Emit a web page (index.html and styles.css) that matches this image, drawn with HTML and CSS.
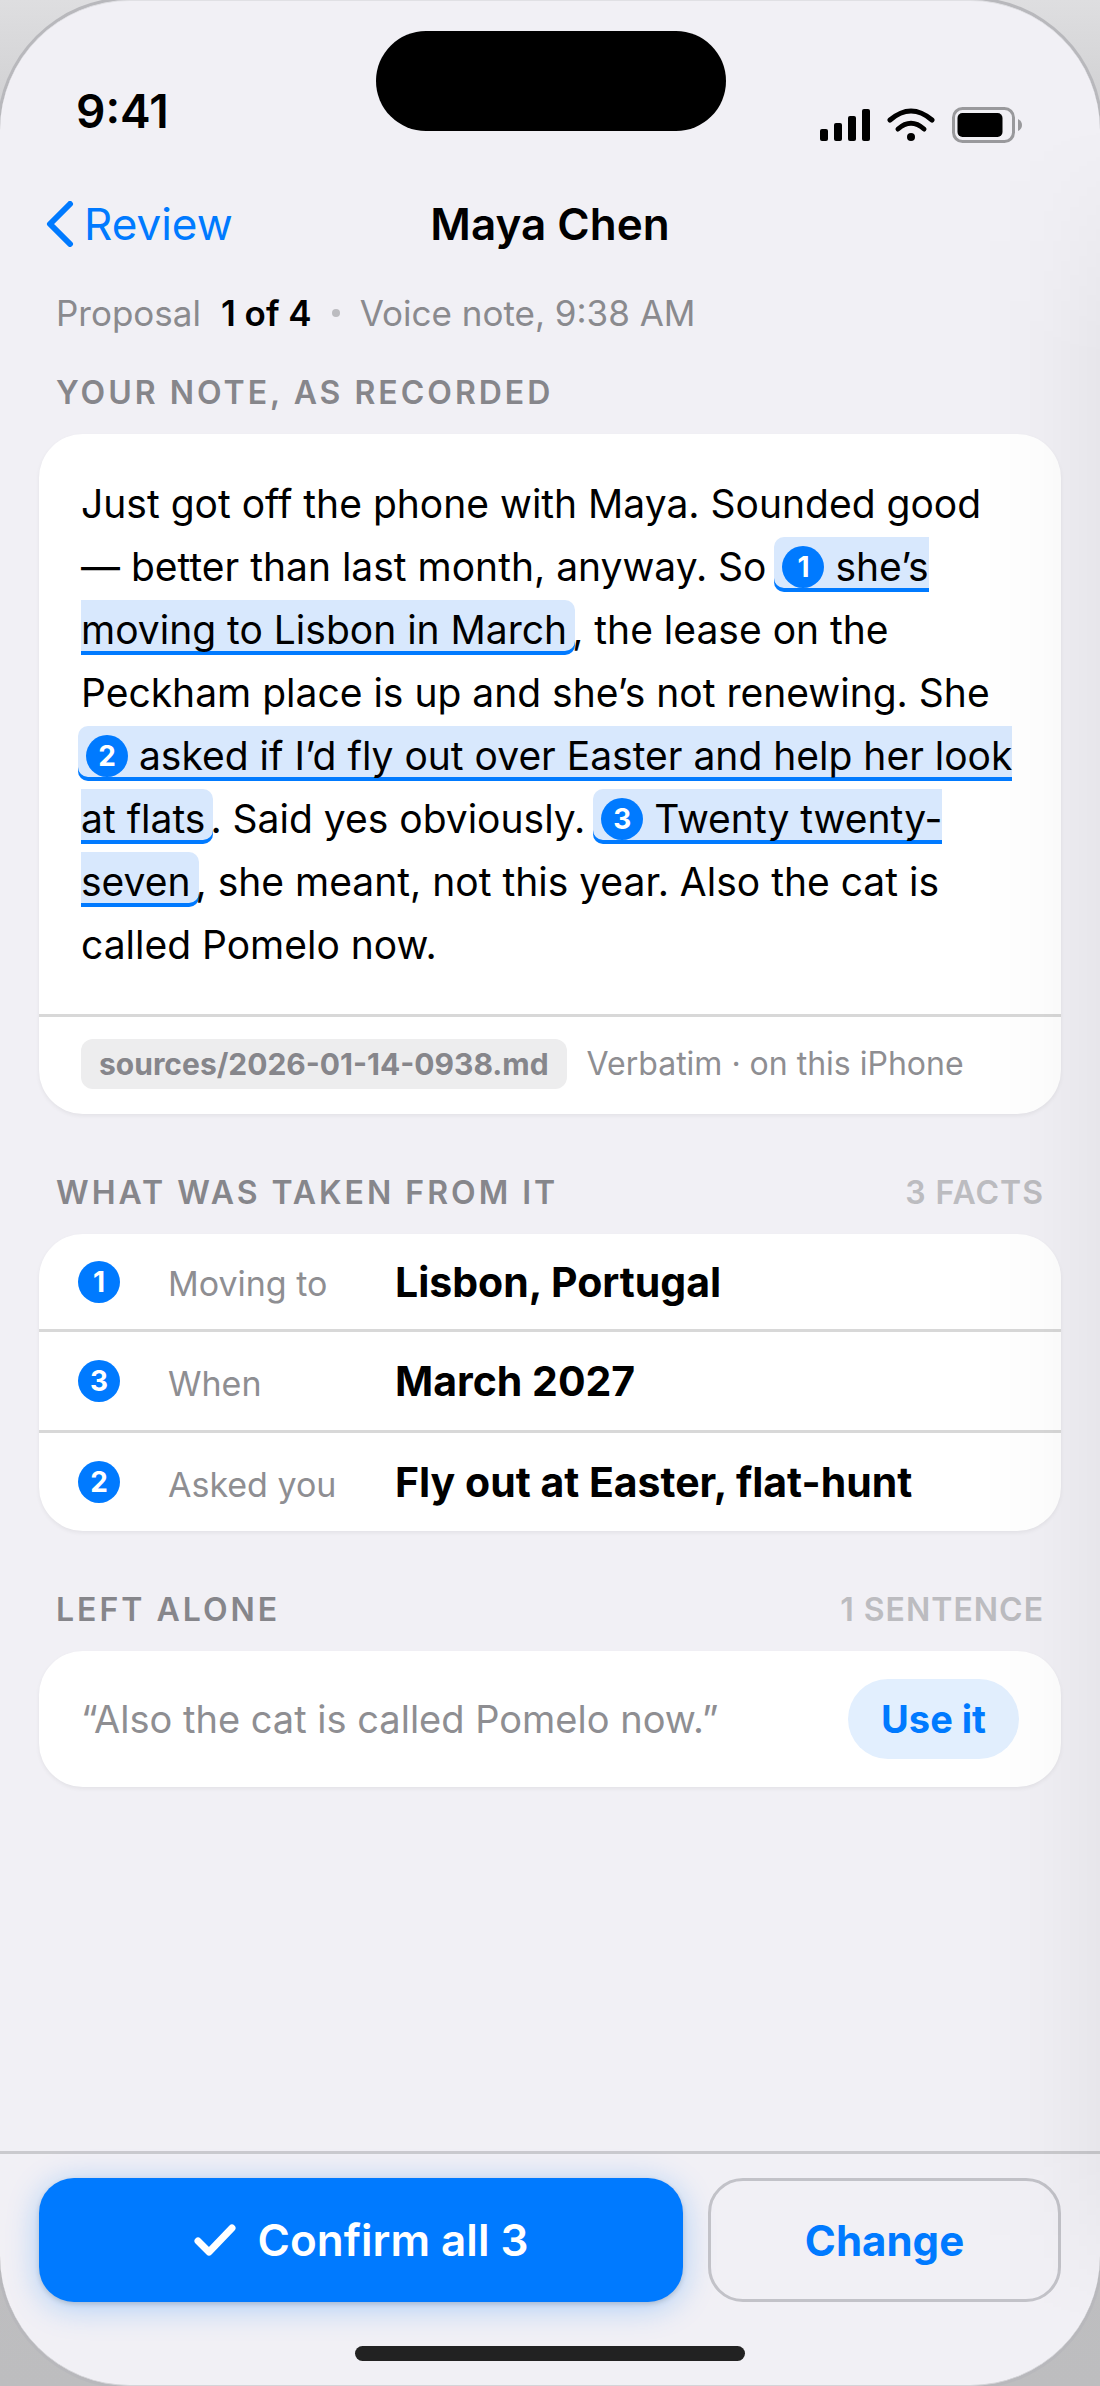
FILE: index.html
```html
<!DOCTYPE html>
<html lang="en">
<head>
  <meta charset="UTF-8" />
  <meta name="viewport" content="width=device-width, initial-scale=1.0"/>
  <title>Maya Chen</title>
  <link rel="stylesheet" href="styles.css">
</head>
<body>
  <div class="phone">
    <div class="island"></div>

    <!-- Status bar -->
    <div class="status-bar">
      <span class="time">9:41</span>
      <div class="status-icons">
        <svg class="signal" viewBox="0 0 50 32" aria-hidden="true">
          <rect x="0" y="20" width="8" height="12" rx="2"/>
          <rect x="14" y="14" width="8" height="18" rx="2"/>
          <rect x="28" y="7" width="8" height="25" rx="2"/>
          <rect x="42" y="0" width="8" height="32" rx="2"/>
        </svg>
        <svg class="wifi" viewBox="0 0 48 34" aria-hidden="true">
          <path d="M3 12 Q24 -6 45 12"/>
          <path d="M11 21 Q24 9.500 37 21"/>
          <circle cx="24" cy="29" r="4"/>
        </svg>
        <svg class="battery" viewBox="0 0 70 36" aria-hidden="true">
          <rect class="shell" x="1.500" y="1.500" width="60" height="33" rx="9"/>
          <rect x="5.500" y="6" width="45" height="24" rx="5"/>
          <path class="nub" d="M66 12 Q70 14 70 18 Q70 22 66 24 Z"/>
        </svg>
      </div>
    </div>

    <!-- Navigation -->
    <header class="nav">
      <a class="back" href="#">
        <svg viewBox="0 0 28 46" aria-hidden="true"><path d="M24 3 L4 23 L24 43"/></svg>
        <span>Review</span>
      </a>
      <h1>Maya Chen</h1>
    </header>

    <main class="content">
      <p class="meta">Proposal <strong>1 of 4</strong><span class="dot"></span>Voice note, 9:38 AM</p>

      <!-- Recorded note -->
      <section>
        <div class="section-head">
          <h2>Your note, as recorded</h2>
        </div>
        <div class="card">
          <p class="note">Just got off the phone with Maya. Sounded good — better than last month, anyway. So <mark><span class="badge">1</span> she’s moving to Lisbon in March</mark>, the lease on the Peckham place is up and she’s not renewing. She <mark><span class="badge">2</span> asked if I’d fly out over Easter and help her look at flats</mark>. Said yes obviously. <mark><span class="badge">3</span> Twenty twenty-seven</mark>, she meant, not this year. Also the cat is called Pomelo now.</p>
          <div class="source">
            <span class="file">sources/2026-01-14-0938.md</span>
            <span>Verbatim · on this iPhone</span>
          </div>
        </div>
      </section>

      <!-- Facts -->
      <section>
        <div class="section-head">
          <h2>What was taken from it</h2>
          <span class="count">3 facts</span>
        </div>
        <table class="card facts">
          <tr>
            <td class="num"><span class="badge">1</span></td>
            <th scope="row">Moving to</th>
            <td>Lisbon, Portugal</td>
          </tr>
          <tr>
            <td class="num"><span class="badge">3</span></td>
            <th scope="row">When</th>
            <td>March 2027</td>
          </tr>
          <tr>
            <td class="num"><span class="badge">2</span></td>
            <th scope="row">Asked you</th>
            <td>Fly out at Easter, flat-hunt</td>
          </tr>
        </table>
      </section>

      <!-- Unused sentence -->
      <section>
        <div class="section-head">
          <h2>Left alone</h2>
          <span class="count">1 sentence</span>
        </div>
        <div class="card leftover">
          <q>Also the cat is called Pomelo now.</q>
          <button class="use">Use it</button>
        </div>
      </section>
    </main>

    <footer class="actions">
      <button class="confirm">
        <svg viewBox="0 0 42 34" aria-hidden="true"><path d="M4 18 L15 29 L38 5"/></svg>
        Confirm all 3
      </button>
      <button class="change">Change</button>
    </footer>
    <div class="home-bar"></div>
  </div>
</body>
</html>
```
FILE: styles.css
```css
* {
  box-sizing: border-box;
}

body {
  margin: 0;
  font-family: Inter, "Liberation Sans", sans-serif;
  color: #000;
  background: linear-gradient(#dedee0, #cfcfd1 120px, #bdbdbf);
}

h1, h2, p {
  margin: 0;
}

button {
  padding: 0;
  font-family: inherit;
  border: none;
  cursor: pointer;
}

.phone {
  position: relative;
  display: flex;
  flex-direction: column;
  min-height: 100vh;
  background: #f1f0f5;
  border-top: 1px solid #e0e0e4;
  border-bottom: 1px solid #d4d4d8;
  border-radius: 130px;
  box-shadow: 0 0 0 3px #b8b8bc;
  overflow: hidden;
}

/* shade along the right edge of the glass */
.phone::after {
  content: "";
  position: absolute;
  top: 120px;
  right: 0;
  bottom: 60px;
  width: 120px;
  background: linear-gradient(to right, transparent, rgba(0, 0, 0, 0.01) 50%, rgba(0, 0, 0, 0.04));
  mask-image: linear-gradient(transparent, #000 240px, #000 calc(100% - 180px), transparent);
  pointer-events: none;
}

.island {
  position: absolute;
  top: 30px;
  left: 50%;
  width: 350px;
  height: 100px;
  margin-left: -174px;
  border-radius: 50px;
  background: #000;
}

/* Status bar */
.status-bar {
  display: flex;
  justify-content: space-between;
  align-items: flex-end;
  height: 142px;
  padding: 0 78px 0 76px;
}

.time {
  font-size: 46px;
  line-height: 52px;
  font-weight: 600;
  margin-bottom: 6px;
}

.status-icons {
  display: flex;
  align-items: center;
  gap: 17px;
}

.signal {
  width: 50px;
  height: 32px;
}

.wifi {
  width: 48px;
  height: 34px;
}

.wifi path {
  fill: none;
  stroke: #000;
  stroke-width: 5;
  stroke-linecap: round;
}

.battery {
  width: 70px;
  height: 36px;
}

.battery .shell {
  fill: none;
  stroke: #99999c;
  stroke-width: 3;
}

.battery .nub {
  fill: #99999c;
}

/* Navigation */
.nav {
  display: grid;
  grid-template-columns: 1fr auto 1fr;
  align-items: center;
  height: 148px;
  padding: 14px 46px 0;
}

.back {
  display: flex;
  align-items: center;
  gap: 10px;
  color: #007aff;
  font-size: 44px;
  text-decoration: none;
}

.back svg {
  width: 28px;
  height: 46px;
}

.back path {
  fill: none;
  stroke: #007aff;
  stroke-width: 6;
  stroke-linecap: round;
  stroke-linejoin: round;
}

.nav h1 {
  font-size: 44px;
  font-weight: 600;
}

/* Content */
.content {
  flex: 1;
  padding: 0 39px;
}

.meta {
  display: flex;
  align-items: center;
  padding: 0 17px;
  font-size: 35px;
  line-height: 44px;
  color: #8a8a8e;
}

.meta strong {
  margin-left: 20px;
  font-weight: 600;
  color: #000;
}

.dot {
  width: 8px;
  height: 8px;
  margin: 0 20px;
  border-radius: 50%;
  background: #bcbcc0;
}

.section-head {
  display: flex;
  justify-content: space-between;
  padding: 38px 17px 21px;
  font-size: 32px;
  line-height: 40px;
  text-transform: uppercase;
}

.section-head h2 {
  font-size: 32px;
  font-weight: 600;
  letter-spacing: 3px;
  color: #86868b;
}

.count {
  font-weight: 600;
  letter-spacing: 1px;
  color: #bcbcc0;
}

.card {
  background: #fff;
  border-radius: 44px;
  box-shadow: 0 2px 4px rgba(0, 0, 0, 0.06);
}

section + section {
  margin-top: 21px;
}

.note {
  padding: 38px 42px;
  font-size: 39px;
  line-height: 63px;
}

mark {
  margin: 0 -3px;
  padding: 6px 8px 2px;
  color: inherit;
  background: #d8e8fd;
  box-shadow: inset 0 -4px #007aff;
  border-radius: 10px;
}

.badge {
  display: inline-block;
  width: 42px;
  height: 42px;
  border-radius: 50%;
  background: #007aff;
  color: #fff;
  font-size: 28px;
  line-height: 42px;
  font-weight: 700;
  text-align: center;
  vertical-align: 4px;
}

.source {
  display: flex;
  align-items: center;
  gap: 20px;
  padding: 22px 42px 25px;
  border-top: 3px solid #d8d8d8;
  font-size: 32px;
  line-height: 50px;
  color: #8e8e92;
}

.file {
  padding: 0 18px;
  border-radius: 12px;
  background: #ededee;
  color: #86868b;
  font-size: 30px;
  font-weight: 700;
}

/* Facts */
.facts {
  width: 100%;
  border-spacing: 0;
}

.facts tr > * {
  height: 101px;
  padding: 0;
  border-top: 3px solid #d8d8d8;
  text-align: left;
  font-weight: 400;
}

.facts tr:first-child > * {
  height: 95px;
  border-top: none;
}

.facts .num {
  width: 129px;
  padding-left: 39px;
}

.facts .badge {
  display: block;
}

.facts th {
  width: 227px;
  padding-top: 4px;
  font-size: 34px;
  color: #8e8e92;
}

.facts td {
  font-size: 41px;
  font-weight: 700;
}

/* Leftover sentence */
.leftover {
  display: flex;
  justify-content: space-between;
  align-items: center;
  padding: 28px 42px;
}

.leftover q {
  font-size: 38px;
  color: #8e8e92;
}

.use {
  padding: 0 33px;
  border-radius: 40px;
  background: #e2effe;
  color: #007aff;
  font-size: 38px;
  line-height: 80px;
  font-weight: 700;
}

/* Bottom actions */
.actions {
  display: flex;
  gap: 25px;
  padding: 24px 39px 44px;
  border-top: 3px solid #cacace;
}

.actions button {
  display: flex;
  justify-content: center;
  align-items: center;
  height: 124px;
  border-radius: 35px;
  font-size: 44px;
  font-weight: 600;
}

.actions .confirm {
  flex: 644;
  gap: 22px;
  background: #007aff;
  color: #fff;
  box-shadow: 0 2px 5px rgba(0, 0, 0, 0.15), 0 5px 32px rgba(0, 122, 255, 0.3);
}

.confirm svg {
  width: 42px;
  height: 34px;
}

.confirm path {
  fill: none;
  stroke: #fff;
  stroke-width: 7;
  stroke-linecap: round;
  stroke-linejoin: round;
}

.actions .change {
  flex: 347;
  background: transparent;
  border: 3px solid #c2c2c8;
  color: #007aff;
  font-size: 42px;
  font-weight: 700;
}

.home-bar {
  width: 390px;
  height: 15px;
  margin: 0 auto 24px;
  border-radius: 8px;
  background: #222;
}
```
